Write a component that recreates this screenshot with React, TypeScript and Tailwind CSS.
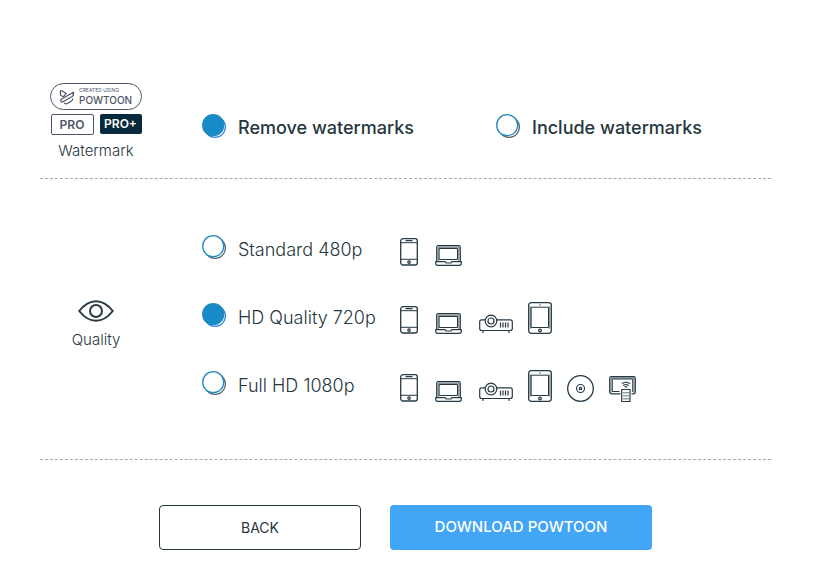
import type { ReactNode } from 'react';

const stroke = {
  fill: 'none',
  stroke: '#263a44',
  strokeWidth: 1.3,
  strokeLinecap: 'round',
  strokeLinejoin: 'round',
} as const;

function PhoneIcon() {
  return (
    <svg className="mr-0.5" width="18" height="28" viewBox="0 0 18 28" {...stroke} aria-hidden="true">
      <rect x="0.7" y="0.7" width="16.6" height="26.3" rx="2.2" />
      <path d="M1 4.7h16M1 21.3h16" strokeWidth="1" />
      <path d="M6 2.7h6" />
      <circle cx="9" cy="24.1" r="1.2" />
    </svg>
  );
}

function LaptopIcon() {
  return (
    <svg className="mr-0.5" width="27" height="21" viewBox="0 0 27 21" {...stroke} strokeWidth="1.200" aria-hidden="true">
      <path d="M3.200 2.500V16M23.800 2.500V16M3.500 2.200h20" stroke="#8b979d" strokeWidth="1.400" />
      <path d="M1.700 16.500V2.200Q1.700.7 3.200.7h20.600q1.500 0 1.500 1.500v14.300" />
      <rect x="4.500" y="3.500" width="18" height="11" strokeWidth="1" />
      <path d="M.7 16.700h9.600l.7 1.300h5l.7-1.300h9.600v1.600q0 2-2 2H2.700q-2 0-2-2z" />
    </svg>
  );
}

function ProjectorIcon() {
  return (
    <svg width="34" height="20" viewBox="0 0 34 20" {...stroke} strokeWidth="1.200" aria-hidden="true">
      <path d="M6.300 5.800H2.700q-2 0-2 2v6.700q0 2 2 2h28.600q2 0 2-2V7.800q0-2-2-2H17.700" />
      <circle cx="12" cy="7" r="5.800" />
      <circle cx="12" cy="7" r="3" />
      <path d="M21.500 8.500v5M24 8.500v5M26.500 8.500v5M29 8.500v5" strokeLinecap="butt" />
      <path d="M4 17v1.500M30 17v1.500" />
    </svg>
  );
}

function TabletIcon() {
  return (
    <svg width="24" height="32" viewBox="0 0 24 32" {...stroke} aria-hidden="true">
      <path d="M2.500 5v21M21.500 5v21" stroke="#8b979d" strokeWidth="1.600" />
      <rect x="0.7" y="0.7" width="22.6" height="30.6" rx="2.500" />
      <rect x="3.500" y="5.200" width="17" height="20.300" strokeWidth="1" />
      <path d="M12 2.900v.1" />
      <circle cx="12" cy="28.500" r="1.300" />
    </svg>
  );
}

function DiscIcon() {
  return (
    <svg width="27" height="27" viewBox="0 0 27 27" {...stroke} aria-hidden="true">
      <circle cx="13.500" cy="13.500" r="12.800" />
      <circle cx="13.500" cy="13.500" r="4" strokeWidth="1.100" />
      <circle cx="13.500" cy="13.500" r="1.200" />
    </svg>
  );
}

function TvIcon() {
  return (
    <svg width="27" height="26" viewBox="0 0 27 26" {...stroke} strokeWidth="1.200" aria-hidden="true">
      <path d="M2 2.500v14M25 2.500v14M2 2h23" stroke="#8b979d" strokeWidth="1.300" />
      <path d="M11 17.800H2.200q-1.500 0-1.500-1.500V2.200Q.7.700 2.200.7h22.600q1.500 0 1.500 1.500v14.100q0 1.500-1.500 1.500H23" />
      <path d="M10 15.500H3.300V3h20.400v12.500" strokeWidth="1" />
      <rect x="12.700" y="13.500" width="8.300" height="12" />
      <path d="M15 16v1.500M17 16v1.500M19 16v1.500M15 19v1.500M17 19v1.500M19 19v1.500M15 22v1.500M17 22v1.500M19 22v1.500" strokeWidth="1" strokeLinecap="butt" />
      <path d="M13.200 7.500q3.700-2.500 7.400 0M14.500 9.300q2.400-1.500 4.800 0M15.800 11q1.100-.7 2.200 0" strokeWidth="1.100" />
    </svg>
  );
}

function EyeIcon() {
  return (
    <svg width="36" height="22" viewBox="0 0 36 22" fill="none" stroke="#263a44" strokeWidth="2" strokeLinejoin="round" aria-hidden="true">
      <path d="M1.200 11Q9 1.200 18 1.200T34.800 11Q27 20.800 18 20.800T1.200 11z" />
      <circle cx="18" cy="11" r="6" />
    </svg>
  );
}

function PowtoonMark() {
  return (
    <svg width="16" height="16" viewBox="0 0 16 16" fill="none" stroke="#4d5566" strokeWidth="1.200" strokeLinecap="round" strokeLinejoin="round" aria-hidden="true">
      <path d="M7.200 4.600 2.800 1.800Q1.400 1.200 1.400 2.800v2.400q0 1 1 1.500l2 1z" />
      <path d="M14.500 3.200 2.600 10q-1.600 1.200-.7 2.500.9.900 2.400.1L13.200 7.500q1.300-.9 1.300-2.400z" />
      <path d="M5.500 14.200q1.200 1.200 2.800.3l4.200-2.500q1.200-.8 1.200-2.200" />
    </svg>
  );
}

type OptionProps = {
  name: string;
  value: string;
  children: ReactNode;
  checked?: boolean;
  bold?: boolean;
};

function Option({ name, value, children, checked = false, bold = false }: OptionProps) {
  return (
    <label className="flex cursor-pointer items-start gap-3 whitespace-nowrap">
      <span className={bold ? 'mt-0.5 grid size-6 shrink-0' : 'mt-px grid size-6 shrink-0'}>
        <input
          type="radio"
          name={name}
          value={value}
          defaultChecked={checked}
          className="peer col-start-1 row-start-1 size-6 cursor-pointer appearance-none rounded-full"
        />
        <svg
          viewBox="0 0 24 24"
          className="pointer-events-none col-start-1 row-start-1 size-6 fill-white stroke-[#56636b] peer-checked:stroke-[#2b83df]"
          aria-hidden="true"
        >
          <circle cx="13" cy="13" r="10.400" strokeWidth="1.200" />
        </svg>
        <svg
          viewBox="0 0 24 24"
          className="pointer-events-none col-start-1 row-start-1 size-6 fill-white stroke-[#2089bf] peer-checked:fill-[#178bc8]"
          aria-hidden="true"
        >
          <circle cx="11.200" cy="11.200" r="10.500" strokeWidth="1.300" />
        </svg>
      </span>
      <span className={bold ? 'text-lg/8 font-medium text-[#263640]' : 'text-lg/8 font-light text-[#263640]'}>{children}</span>
    </label>
  );
}

const qualities = [
  { value: '480p', label: 'Standard 480p', icons: [PhoneIcon, LaptopIcon] },
  { value: '720p', label: 'HD Quality 720p', icons: [PhoneIcon, LaptopIcon, ProjectorIcon, TabletIcon] },
  { value: '1080p', label: 'Full HD 1080p', icons: [PhoneIcon, LaptopIcon, ProjectorIcon, TabletIcon, DiscIcon, TvIcon] },
];

export default function App() {
  return (
    <main className="bg-white pt-[83px] pr-[45px] pb-9 pl-10 font-['Inter','Noto_Sans',sans-serif] text-[#263640]">
      <fieldset aria-labelledby="watermark-title" className="flex border-b border-dashed border-[#a6a9ab] pb-[5px]">
        <div className="flex w-28 shrink-0 flex-col items-center">
          <div className="flex h-[27px] w-[92px] items-center gap-1 rounded-full border border-[#4d5566] pl-2">
            <PowtoonMark />
            <div className="flex flex-col text-[#4d5566]">
              <span className="text-[5px] leading-[8px]">CREATED USING</span>
              <span className="text-[10px] leading-[13px] font-medium">POWTOON</span>
            </div>
          </div>
          <div className="mt-1 flex gap-1.5 text-xs/5 font-semibold">
            <span className="h-[21px] w-[43px] rounded-xs border border-[#4d5566] text-center text-[#4d5566]">PRO</span>
            <span className="h-5 w-[42px] rounded-xs bg-[#082a3d] text-center text-white">PRO+</span>
          </div>
          <span id="watermark-title" className="mt-1.5 text-[15px] leading-5 font-light text-[#263640]">Watermark</span>
        </div>
        <div className="ml-[50px] grid h-[90px] flex-1 grid-cols-[294px_1fr] items-center">
          <Option name="watermark" value="remove" checked bold>Remove watermarks</Option>
          <Option name="watermark" value="include" bold>Include watermarks</Option>
        </div>
      </fieldset>

      <fieldset aria-labelledby="quality-title" className="flex items-center border-b border-dashed border-[#a6a9ab] pt-[55px] pb-[57px]">
        <div className="flex w-28 shrink-0 flex-col items-center gap-2 pt-3.5">
          <EyeIcon />
          <span id="quality-title" className="text-[15px] leading-5 font-light text-[#263640]">Quality</span>
        </div>
        <div className="ml-[50px] flex flex-1 flex-col gap-9">
          {qualities.map((quality) => (
            <div key={quality.value} className="grid h-8 grid-cols-[198px_1fr]">
              <Option name="quality" value={quality.value} checked={quality.value === '720p'}>{quality.label}</Option>
              <div className="flex items-end gap-[15px]">
                {quality.icons.map((Icon, index) => (
                  <Icon key={index} />
                ))}
              </div>
            </div>
          ))}
        </div>
      </fieldset>

      <div className="mt-[45px] flex justify-center gap-[29px]">
        <button type="button" className="h-[45px] w-[202px] rounded border border-[#263640] bg-white text-sm">BACK</button>
        <button type="button" className="h-[45px] w-[262px] rounded bg-[#42a5f5] text-[15px] font-medium text-white">DOWNLOAD POWTOON</button>
      </div>
    </main>
  );
}
